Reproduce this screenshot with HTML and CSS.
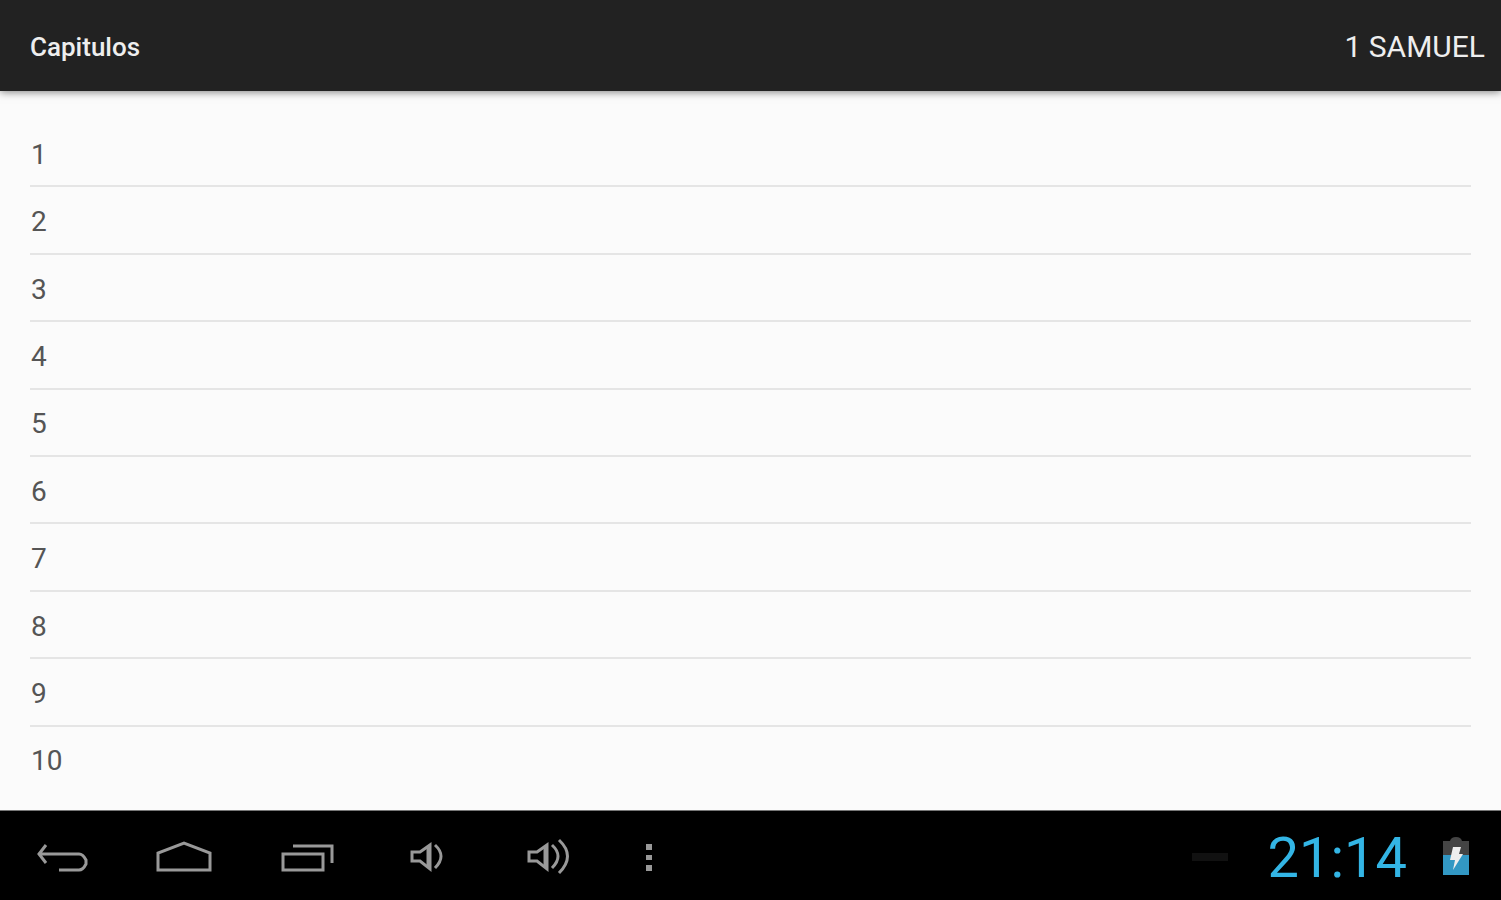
FILE: index.html
```html
<!DOCTYPE html>
<html lang="es">
<head>
    <meta charset="UTF-8">
    <meta name="viewport" content="width=device-width, initial-scale=1.0">
    <title>Capitulos</title>
    <link rel="stylesheet" href="styles.css">
</head>
<body>
    <header class="action-bar">
        <h1 class="title">Capitulos</h1>
        <span class="book">1 SAMUEL</span>
    </header>

    <main class="content">
        <ul class="chapters">
            <li><a href="#1">1</a></li>
            <li><a href="#2">2</a></li>
            <li><a href="#3">3</a></li>
            <li><a href="#4">4</a></li>
            <li><a href="#5">5</a></li>
            <li><a href="#6">6</a></li>
            <li><a href="#7">7</a></li>
            <li><a href="#8">8</a></li>
            <li><a href="#9">9</a></li>
            <li><a href="#10">10</a></li>
        </ul>
    </main>

    <footer class="system-bar">
        <nav class="nav-buttons">
            <button class="nav-button" type="button" aria-label="Atrás">
                <svg class="icon" viewBox="0 0 60 49">
                    <path d="M15 14L8 23L15 32M7 23H48Q52 23 55 29V33Q52 39 48 39H28"/>
                </svg>
            </button>
            <button class="nav-button" type="button" aria-label="Inicio">
                <svg class="icon" viewBox="0 0 60 49">
                    <path d="M5 39V22L31 12L57 22V39Z"/>
                </svg>
            </button>
            <button class="nav-button" type="button" aria-label="Recientes">
                <svg class="icon" viewBox="0 0 60 49">
                    <path d="M8 23H48V39H8ZM18 15H57V32"/>
                </svg>
            </button>
            <button class="nav-button" type="button" aria-label="Bajar volumen">
                <svg class="icon" viewBox="0 0 60 49">
                    <path d="M15 21H23L33 14V38L23 30H15Z"/>
                    <path d="M31 15V36"/>
                    <path d="M38 14Q50 25 38 37"/>
                </svg>
            </button>
            <button class="nav-button" type="button" aria-label="Subir volumen">
                <svg class="icon" viewBox="0 0 60 49">
                    <path d="M10 21H18L28 14V38L18 30H10Z"/>
                    <path d="M26 15V36"/>
                    <path d="M33 14Q45 25 33 37M40 9Q57 25 40 42"/>
                </svg>
            </button>
            <button class="nav-button menu" type="button" aria-label="Menú">
                <svg class="icon dots" viewBox="0 0 60 49">
                    <path d="M27 13h6v6h-6zM27 24h6v5h-6zM27 34h6v6h-6z"/>
                </svg>
            </button>
        </nav>

        <div class="status">
            <span class="notification"></span>
            <time class="clock">21:14</time>
            <svg class="battery" viewBox="0 0 26 40">
                <path fill="#444" d="M0 4H7Q8 0 13 0Q18 0 19 4H26V20H0Z"/>
                <path fill="#3298c4" d="M0 18H26V38H0Z"/>
                <path fill="#eee" d="M10 10H18L16 17H20L10 33L12 23H7Z"/>
            </svg>
        </div>
    </footer>
</body>
</html>
```
FILE: styles.css
```css
:root {
    --bar-bg: #222;
    --page-bg: #fbfbfb;
    --divider: #e5e5e5;
    --icon: #999;
    --holo-blue: #33b5e5;
}

* {
    box-sizing: border-box;
}

body {
    margin: 0;
    min-height: 100vh;
    display: flex;
    flex-direction: column;
    background-color: var(--page-bg);
    color: #555;
    font-family: Roboto, "Liberation Sans", sans-serif;
    font-size: 28px;
}

.action-bar {
    display: flex;
    justify-content: space-between;
    align-items: center;
    height: 91px;
    padding: 2px 16px 0 30px;
    background-color: var(--bar-bg);
    color: #eee;
    box-shadow: 0 1px 8px rgba(0, 0, 0, 0.5);
}

.title {
    margin: 0;
    font-size: 26px;
    font-weight: 500;
}

.book {
    font-size: 30px;
}

.content {
    flex: 1;
    display: flex;
    padding: 29px 30px 16px;
}

.chapters {
    flex: 1;
    display: flex;
    flex-direction: column;
    margin: 0;
    padding: 0;
    list-style: none;
}

.chapters li {
    flex: 1;
    display: flex;
    border-bottom: 2px solid var(--divider);
}

.chapters li:last-child {
    border-bottom-color: transparent;
}

.chapters a {
    flex: 1;
    display: flex;
    align-items: center;
    min-height: 48px;
    padding: 3px 0 0 1px;
    color: inherit;
    text-decoration: none;
}

.system-bar {
    display: flex;
    justify-content: space-between;
    height: 90px;
    border-top: 1px solid #777;
    background-color: #000;
}

.nav-buttons {
    display: flex;
}

.nav-button {
    display: flex;
    justify-content: center;
    align-items: center;
    width: 122px;
    padding: 0;
    border: none;
    background: none;
    cursor: pointer;
}

.nav-button.menu {
    width: 78px;
}

.icon {
    width: 60px;
    height: 49px;
    flex: none;
    fill: none;
    stroke: var(--icon);
    stroke-width: 3;
}

.icon.dots {
    fill: var(--icon);
    stroke: none;
}

.status {
    display: flex;
    align-items: center;
    padding: 2px 32px 0 0;
}

.notification {
    width: 36px;
    height: 8px;
    margin-right: 40px;
    background-color: #111;
}

.clock {
    padding-top: 3px;
    margin-right: 36px;
    color: var(--holo-blue);
    font-size: 56px;
}

.battery {
    width: 26px;
    height: 40px;
}
```
